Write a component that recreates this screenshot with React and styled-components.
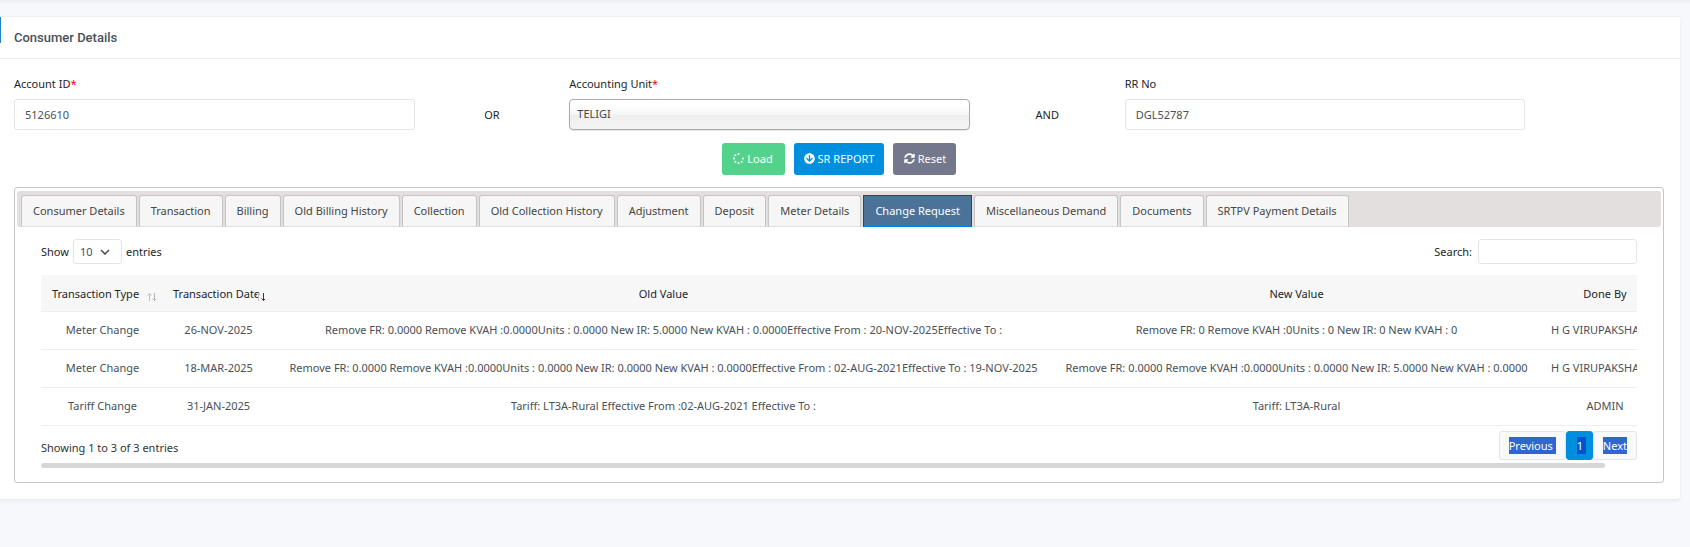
import React, { useState } from "react";
import styled, { createGlobalStyle } from "styled-components";
import { FaArrowCircleDown, FaSpinner, FaSyncAlt } from "react-icons/fa";

const tabs = [
  "Consumer Details",
  "Transaction",
  "Billing",
  "Old Billing History",
  "Collection",
  "Old Collection History",
  "Adjustment",
  "Deposit",
  "Meter Details",
  "Change Request",
  "Miscellaneous Demand",
  "Documents",
  "SRTPV Payment Details",
];

const columns = [
  { title: "Transaction Type", width: 123, sort: "none" },
  { title: "Transaction Date", width: 109, sort: "desc" },
  { title: "Old Value", width: 781 },
  { title: "New Value", width: 485 },
  { title: "Done By", width: 132 },
];

const rows = [
  [
    "Meter Change",
    "26-NOV-2025",
    "Remove FR: 0.0000 Remove KVAH :0.0000Units : 0.0000 New IR: 5.0000 New KVAH : 0.0000Effective From : 20-NOV-2025Effective To :",
    "Remove FR: 0 Remove KVAH :0Units : 0 New IR: 0 New KVAH : 0",
    "H G VIRUPAKSHAPPA",
  ],
  [
    "Meter Change",
    "18-MAR-2025",
    "Remove FR: 0.0000 Remove KVAH :0.0000Units : 0.0000 New IR: 0.0000 New KVAH : 0.0000Effective From : 02-AUG-2021Effective To : 19-NOV-2025",
    "Remove FR: 0.0000 Remove KVAH :0.0000Units : 0.0000 New IR: 5.0000 New KVAH : 0.0000",
    "H G VIRUPAKSHAPPA",
  ],
  [
    "Tariff Change",
    "31-JAN-2025",
    "Tariff: LT3A-Rural Effective From :02-AUG-2021 Effective To :",
    "Tariff: LT3A-Rural",
    "ADMIN",
  ],
];

const SortArrows = ({ sort }) => (
  <Arrows width="9" height="10" viewBox="0 0 9 10" aria-hidden="true">
    <path d="M2.5 9V1.5M0.5 3.5L2.5 1.5L4.5 3.5" stroke="#c2c2c2" />
    <path
      d="M7.5 1V8.5M5.5 6.5L7.5 8.5L9.5 6.5"
      stroke={sort === "desc" ? "#333" : "#b5b5b5"}
    />
  </Arrows>
);

const App = () => {
  const [active, setActive] = useState("Change Request");
  const [accountId, setAccountId] = useState("5126610");
  const [rrNo, setRrNo] = useState("DGL52787");
  const [search, setSearch] = useState("");

  const reset = () => {
    setAccountId("");
    setRrNo("");
  };

  const visible = rows.filter((row) =>
    row.join(" ").toLowerCase().includes(search.toLowerCase())
  );

  return (
    <Page>
      <GlobalStyle />
      <Card>
        <CardHeader>
          <Title>Consumer Details</Title>
        </CardHeader>
        <CardBody>
          <Fields>
            <Field>
              <Label htmlFor="account">
                Account ID<Required>*</Required>
              </Label>
              <Input
                id="account"
                value={accountId}
                onChange={(e) => setAccountId(e.target.value)}
              />
            </Field>
            <Joiner>OR</Joiner>
            <Field>
              <Label htmlFor="unit">
                Accounting Unit<Required>*</Required>
              </Label>
              <UnitSelect id="unit">
                <option>TELIGI</option>
              </UnitSelect>
            </Field>
            <Joiner>AND</Joiner>
            <Field>
              <Label htmlFor="rrno">RR No</Label>
              <Input
                id="rrno"
                value={rrNo}
                onChange={(e) => setRrNo(e.target.value)}
              />
            </Field>
          </Fields>

          <Actions>
            <Button $color="#53d28c">
              <FaSpinner />
              Load
            </Button>
            <Button $color="#008fde">
              <FaArrowCircleDown />
              SR REPORT
            </Button>
            <Button $color="#74788d" onClick={reset}>
              <FaSyncAlt />
              Reset
            </Button>
          </Actions>

          <TabBox>
            <TabBar role="tablist">
              {tabs.map((tab) => (
                <Tab
                  key={tab}
                  role="tab"
                  aria-selected={tab === active}
                  $active={tab === active}
                  onClick={() => setActive(tab)}
                >
                  {tab}
                </Tab>
              ))}
            </TabBar>

            <Panel>
              <Tools>
                <ToolLabel>
                  Show
                  <LengthSelect>
                    <option>10</option>
                  </LengthSelect>
                  entries
                </ToolLabel>
                <ToolLabel $wide>
                  Search:
                  <SearchInput
                    type="search"
                    value={search}
                    onChange={(e) => setSearch(e.target.value)}
                  />
                </ToolLabel>
              </Tools>

              <TableWrap>
                <Table>
                  <colgroup>
                    {columns.map((col) => (
                      <col key={col.title} width={col.width} />
                    ))}
                  </colgroup>
                  <thead>
                    <tr>
                      {columns.map((col) => (
                        <Th key={col.title} $sortable={!!col.sort}>
                          {col.title}
                          {col.sort && <SortArrows sort={col.sort} />}
                        </Th>
                      ))}
                    </tr>
                  </thead>
                  <tbody>
                    {visible.map((row) => (
                      <tr key={row[1]}>
                        {row.map((cell, i) => (
                          <Td key={i}>{cell}</Td>
                        ))}
                      </tr>
                    ))}
                  </tbody>
                </Table>
              </TableWrap>

              <Footer>
                <Info>Showing 1 to 3 of 3 entries</Info>
                <Pagination>
                  <PageLink href="#prev">
                    <Mark>Previous&nbsp;</Mark>
                  </PageLink>
                  <PageLink href="#1" $current>
                    <Mark $current>1&nbsp;</Mark>
                  </PageLink>
                  <PageLink href="#next">
                    <Mark>Next</Mark>
                  </PageLink>
                </Pagination>
              </Footer>
              <ScrollThumb />
            </Panel>
          </TabBox>
        </CardBody>
      </Card>
    </Page>
  );
};

const GlobalStyle = createGlobalStyle`
  * {
    box-sizing: border-box;
  }
  body {
    margin: 0;
    background: #f6f8fb;
    color: #212529;
    font: 11px/17px "Noto Sans", sans-serif;
  }
  input, select, button {
    font: inherit;
  }
`;
const Page = styled.div`
  padding: 16px 10px 48px 0;
  background: linear-gradient(#ebedf0, #f6f8fb 4px) no-repeat;
`;
const Card = styled.section`
  background: #fff;
  border-top: 1px solid #eeeff1;
  border-radius: 0 3px 3px 0;
  box-shadow: 0 2px 3px #e9ebf1;
`;
const CardHeader = styled.header`
  display: flex;
  align-items: center;
  height: 42px;
  padding: 0 14px;
  border-bottom: 1px solid #eeeff1;
  background: linear-gradient(#1c84c6, #1c84c6) 0 0 / 1px 26px no-repeat;
`;
const Title = styled.h1`
  margin: 0;
  color: #495057;
  font: 500 13px/20px Roboto, sans-serif;
`;
const CardBody = styled.div`
  padding: 16px 16px 16px 14px;
`;
const Fields = styled.div`
  display: grid;
  grid-template-columns: 3fr 1fr 3fr 1fr 3fr 1fr;
  margin: 0 -8px;
`;
const Field = styled.div`
  display: flex;
  flex-direction: column;
  gap: 7px;
  padding: 0 8px;
`;
const Label = styled.label`
  line-height: 17px;
`;
const Required = styled.span`
  color: red;
`;
const Input = styled.input`
  width: 100%;
  height: 31px;
  padding: 0 10px;
  border: 1px solid #e2e5e8;
  border-radius: 3px;
  outline: 0;
  background: #fff;
  color: #495057;
`;
const UnitSelect = styled.select`
  appearance: none;
  width: 100%;
  height: 31px;
  padding: 0 7px 2px;
  border: 1px solid #aaa;
  border-radius: 4px;
  background: linear-gradient(#fff 20%, #f6f6f6 50%, #eee 52%, #f4f4f4 100%);
  box-shadow: 0 1px 1px rgba(0, 0, 0, 0.1);
  color: #444;
`;
const Joiner = styled.div`
  align-self: end;
  line-height: 31px;
  text-align: center;
`;
const Actions = styled.div`
  display: flex;
  justify-content: center;
  gap: 9px;
  margin: 13px 0 12px;
`;
const Button = styled.button`
  display: flex;
  align-items: center;
  justify-content: center;
  gap: 3px;
  min-width: 63px;
  height: 32px;
  padding: 0 10px 2px;
  border: 0;
  border-radius: 3px;
  background: ${(props) => props.$color};
  color: #fff;
`;
const TabBox = styled.div`
  padding: 3px 2px;
  border: 1px solid #c5c5c5;
  border-radius: 3px;
`;
const TabBar = styled.div`
  display: flex;
  gap: 2px;
  padding: 4px 4px 0;
  border-radius: 3px;
  background: #e3dfdf;
`;
const Tab = styled.button`
  height: 32px;
  padding: 0 11px 2px;
  border: 1px solid ${(props) => (props.$active ? "#003eff" : "#c5c5c5")};
  border-bottom-color: ${(props) => (props.$active ? "#007fff" : "#e3dfdf")};
  border-radius: ${(props) => (props.$active ? "0" : "3px 3px 0 0")};
  background: ${(props) => (props.$active ? "#4b7399" : "#f6f6f6")};
  color: ${(props) => (props.$active ? "#fff" : "#454545")};
  white-space: nowrap;
`;
const Panel = styled.div`
  padding: 12px 24px 11px;
`;
const Tools = styled.div`
  display: flex;
  justify-content: space-between;
  margin-bottom: 11px;
`;
const ToolLabel = styled.label`
  display: flex;
  align-items: center;
  gap: ${(props) => (props.$wide ? "6px" : "4px")};
`;
const LengthSelect = styled.select`
  appearance: none;
  width: 49px;
  height: 25px;
  padding: 0 6px;
  border: 1px solid #e2e5e8;
  border-radius: 3px;
  background: #fff
    url("data:image/svg+xml,%3Csvg xmlns='http://www.w3.org/2000/svg' viewBox='0 0 10 6'%3E%3Cpath d='M1 1l4 4 4-4' fill='none' stroke='%23495057' stroke-width='1.6'/%3E%3C/svg%3E")
    right 11px center / 10px 6px no-repeat;
  color: #495057;
`;
const SearchInput = styled.input`
  width: 159px;
  height: 25px;
  padding: 0 8px;
  border: 1px solid #e2e5e8;
  border-radius: 3px;
  outline: 0;
`;
const TableWrap = styled.div`
  overflow: hidden;
`;
const Table = styled.table`
  width: 1630px;
  table-layout: fixed;
  border-spacing: 0;
  text-align: center;
  white-space: nowrap;
`;
const Th = styled.th`
  position: relative;
  height: 37px;
  padding: 0 ${(props) => (props.$sortable ? "23px" : "9px")} 0 9px;
  border-bottom: 1px solid #eceef0;
  background: #f7f7f7;
  color: #212529;
  font-weight: 400;
`;
const Arrows = styled.svg`
  position: absolute;
  right: 8px;
  bottom: 9px;
  fill: none;
`;
const Td = styled.td`
  height: 38px;
  padding: 0 9px 2px;
  border-bottom: 1px solid #eceef0;
  color: #495057;
`;
const Footer = styled.div`
  display: flex;
  justify-content: space-between;
  margin: 5px 0 3px;
`;
const Info = styled.span`
  align-self: flex-end;
  padding-bottom: 4px;
  color: #333;
`;
const Pagination = styled.nav`
  display: flex;
`;
const PageLink = styled.a`
  display: flex;
  align-items: center;
  height: 29px;
  padding: 0 ${(props) => (props.$current ? "6px 0 10px" : "9px")};
  border: 1px solid ${(props) => (props.$current ? "#008fde" : "#e2e5e8")};
  border-radius: 3px;
  background: ${(props) => (props.$current ? "#008fde" : "#f8f9fb")};
  text-decoration: none;
`;
const Mark = styled.span`
  background: ${(props) => (props.$current ? "#0053ce" : "#3166d2")};
  color: #fff;
`;
const ScrollThumb = styled.div`
  width: 98%;
  height: 5px;
  border-radius: 3px;
  background: #d6d7d9;
`;

export default App;
